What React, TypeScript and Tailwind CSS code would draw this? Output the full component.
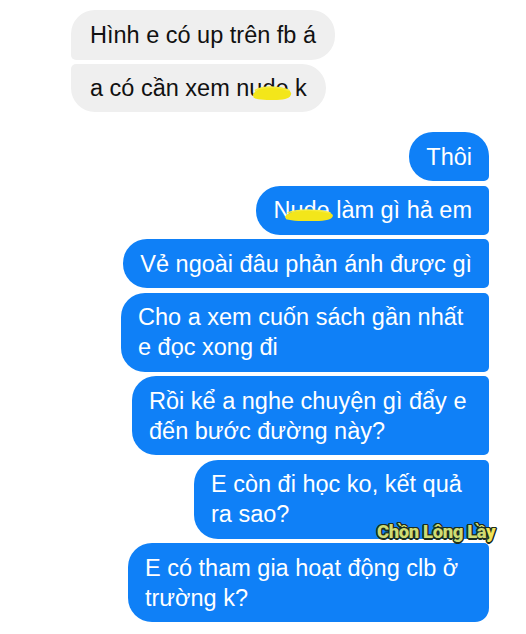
import React from 'react';

const font = { fontFamily: '"Liberation Sans", Arial, sans-serif' };

// yellow marker blob used to hide a word
const Scribble = ({ className }: { className: string }) => (
    <svg className={`absolute ${className}`} viewBox="0 0 48 14" preserveAspectRatio="none">
        <path d="M1,8 C5,2 16,1 28,1 C38,1 46,3 47,7 C47,11 40,13 30,13 C18,13 8,13 2,11 Z" fill="#f3e61a" />
        <path d="M4,4 C14,0 30,0 44,4" stroke="#f6ec3c" strokeWidth="1.5" fill="none" strokeLinecap="round" />
    </svg>
);

const Blue = ({ children, className = '' }: { children: React.ReactNode; className?: string }) => (
    <div className={`relative bg-[#0f80f7] text-white px-[17px] py-[9.5px] text-[23.5px] leading-[30px] rounded-l-[24px] ${className}`}>
        {children}
    </div>
);

const App = () => {
    return (
        <div className='w-[526px] h-[634px] bg-white relative overflow-hidden' style={font}>
            <div className='flex flex-col items-start gap-[4px] pt-[10px] pl-[71px]'>
                <div className='bg-[#efefef] text-[#111] px-[19px] py-[10px] text-[23.5px] leading-[30px] rounded-t-[24px] rounded-br-[24px] rounded-bl-[5px]'>
                    Hình e có up trên fb á
                </div>
                <div className='bg-[#efefef] text-[#111] px-[19px] py-[9px] text-[23.5px] leading-[30px] rounded-r-[24px] rounded-bl-[24px] rounded-tl-[5px]'>
                    a có cần xem n<span className='relative'>ude<Scribble className='left-[3px] top-[11px] w-[40px] h-[15px]' /></span> k
                </div>
            </div>

            <div className='flex flex-col items-end gap-[4.5px] mt-[20px] pr-[37px]'>
                <Blue className='rounded-tr-[24px] rounded-br-[5px]'>Thôi</Blue>
                <Blue className='rounded-r-[5px]'>
                    N<span className='relative'>ude<Scribble className='-left-[6px] top-[12px] w-[50px] h-[13px]' /></span> làm gì hả em
                </Blue>
                <Blue className='rounded-r-[5px]'>Vẻ ngoài đâu phản ánh được gì</Blue>
                <Blue className='rounded-r-[5px] w-[368px]'>Cho a xem cuốn sách gần nhất<br />e đọc xong đi</Blue>
                <Blue className='rounded-r-[5px] w-[357px]'>Rồi kể a nghe chuyện gì đẩy e<br />đến bước đường này?</Blue>
                <Blue className='rounded-r-[5px] w-[295px]'>E còn đi học ko, kết quả<br />ra sao?</Blue>
                <Blue className='rounded-tr-[5px] rounded-br-[14px] w-[361px]'>E có tham gia hoạt động clb ở<br />trường k?</Blue>
            </div>

            {/* page watermark */}
            <div className='absolute left-[377px] top-[519px] text-[18.5px] font-black tracking-[-0.4px] text-[#cfdc73] [text-shadow:1.5px_0_0_#1d2e1e,-1.5px_0_0_#1d2e1e,0_1.5px_0_#1d2e1e,0_-1.5px_0_#1d2e1e,1px_1px_0_#1d2e1e,-1px_-1px_0_#1d2e1e,1px_-1px_0_#1d2e1e,-1px_1px_0_#1d2e1e]'
                style={{ fontFamily: 'Roboto, "Noto Sans", sans-serif' }}>
                Chồn Lông Lầ<span className='text-[#f0e45a]'>y</span>
            </div>
        </div>
    );
};

export default App;
